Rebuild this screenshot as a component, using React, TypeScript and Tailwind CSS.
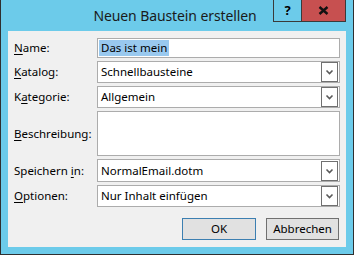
import React from "react";

const font = { fontFamily: '"Noto Sans", "Segoe UI", Arial, sans-serif' };

function U({ children }: { children: React.ReactNode }) {
  return <span className="underline underline-offset-2 decoration-1">{children}</span>;
}

function Chevron() {
  return (
    <svg width="9" height="6" viewBox="0 0 9 6">
      <path d="M1.5 1.5 L4.5 4.5 L7.5 1.5" fill="none" stroke="#5a5a5a" strokeWidth="1.6" />
    </svg>
  );
}

function Combo({ value, h = "h-[22px]" }: { value: string; h?: string }) {
  return (
    <div className={`flex-1 ${h} bg-white border border-[#acacac] flex items-center`}>
      <span className="flex-1 pl-[3px] text-[11.5px] text-black leading-none">{value}</span>
      <div className="w-[17px] h-[20px] mr-px border border-[#707070] bg-white flex items-center justify-center">
        <Chevron />
      </div>
    </div>
  );
}

function Row({
  label,
  children,
  h = "h-[22px]",
}: {
  label: React.ReactNode;
  children: React.ReactNode;
  h?: string;
}) {
  return (
    <div className={`flex items-center ${h}`}>
      <div className="w-[83px] text-[11.5px] text-black leading-none">{label}</div>
      {children}
    </div>
  );
}

export default function App() {
  return (
    <div
      className="w-[354px] h-[255px] bg-[#6ccbea] border-x border-b border-[#2f2f2f] flex flex-col px-[7px] pb-[7px]"
      style={font}
    >
      <div className="h-[31px] relative flex items-start justify-center">
        <div className="mt-[7px] -ml-[4px] text-[14px] tracking-[-0.1px] leading-[18px] text-[#1a1a1a]">
          Neuen Baustein erstellen
        </div>
        <div className="absolute right-0 top-0 flex border border-t-0 border-[#3a3a3a] h-[22px]">
          <div className="w-[28px] flex items-center justify-center border-r border-[#3a3a3a] text-[13px] font-bold text-black">
            ?
          </div>
          <div className="w-[43px] bg-[#c75050] flex items-center justify-center">
            <svg width="11" height="9" viewBox="0 0 11 9">
              <path d="M1.5 1 L9.5 8 M9.5 1 L1.5 8" stroke="#111" strokeWidth="2.4" />
            </svg>
          </div>
        </div>
      </div>
      <div className="flex-1 bg-[#f0f0f0] pt-[7px] px-[6px] pb-[7px] flex flex-col">
        <div className="flex flex-col gap-[3px]">
          <Row label={<><U>N</U>ame:</>} h="h-[20px]">
            <div className="flex-1 h-[20px] bg-white border border-[#acacac] flex items-center pl-px">
              <span className="bg-[#99c9ef] text-[11.5px] text-black leading-[16px] px-[2px]">Das ist mein</span>
            </div>
          </Row>
          <Row label={<><U>K</U>atalog:</>}>
            <Combo value="Schnellbausteine" />
          </Row>
          <Row label={<>K<U>a</U>tegorie:</>}>
            <Combo value="Allgemein" />
          </Row>
          <Row label={<><U>B</U>eschreibung:</>} h="h-[45px]">
            <div className="flex-1 h-[45px] bg-white border border-[#acacac]" />
          </Row>
          <Row label={<>Speichern <U>i</U>n:</>} h="h-[23px]">
            <Combo value="NormalEmail.dotm" h="h-[23px]" />
          </Row>
          <Row label={<><U>O</U>ptionen:</>}>
            <Combo value="Nur Inhalt einfügen" />
          </Row>
        </div>
        <div className="flex-1" />
        <div className="flex justify-end gap-[10px] pr-[1px]">
          <button className="w-[74px] h-[22px] bg-[#e1e1e1] border border-[#3c7fb1] text-[11.5px] text-black leading-none">
            OK
          </button>
          <button className="w-[73px] h-[22px] bg-[#e1e1e1] border border-[#707070] text-[11.5px] text-black leading-none">
            Abbrechen
          </button>
        </div>
      </div>
    </div>
  );
}
